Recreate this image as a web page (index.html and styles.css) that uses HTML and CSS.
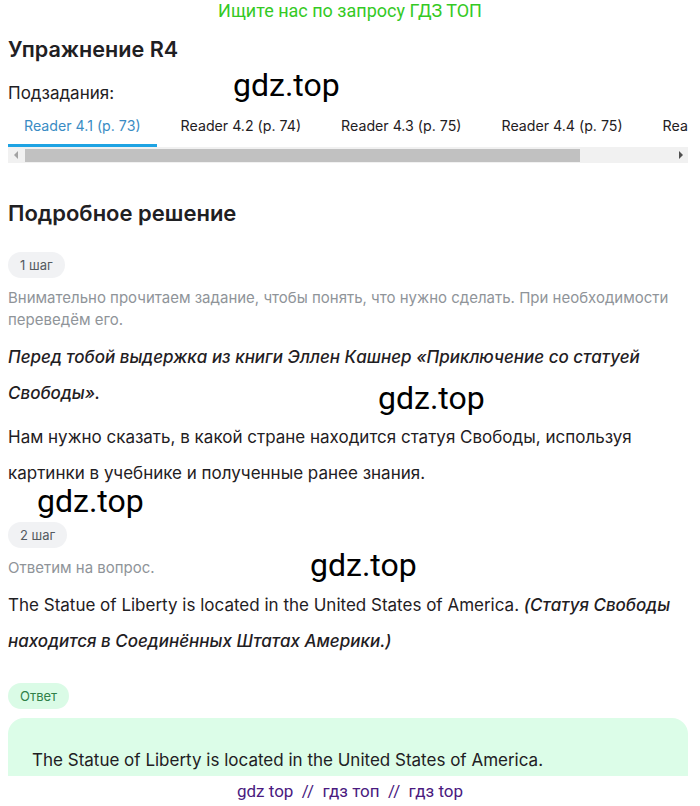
FILE: index.html
```html
<!DOCTYPE html>
<html lang="ru">
<head>
<meta charset="utf-8">
<title>Упражнение R4</title>
<link rel="stylesheet" href="styles.css">
</head>
<body>
<div class="banner">Ищите нас по запросу ГДЗ ТОП</div>
<main class="page">
  <h1 class="title">Упражнение R4</h1>
  <div class="subtasks-label">Подзадания:</div>
  <div class="tabs-wrap">
    <div class="tabs">
      <div class="tab active">Reader 4.1 (p. 73)</div>
      <div class="tab">Reader 4.2 (p. 74)</div>
      <div class="tab">Reader 4.3 (p. 75)</div>
      <div class="tab">Reader 4.4 (p. 75)</div>
      <div class="tab">Reader 4.5 (p. 76)</div>
    </div>
    <div class="scrollbar" aria-hidden="true">
      <span class="sb-btn sb-left"></span>
      <span class="sb-track"><span class="sb-thumb"></span></span>
      <span class="sb-btn sb-right"></span>
    </div>
  </div>

  <h2 class="section-title">Подробное решение</h2>

  <div class="step">
    <span class="pill">1 шаг</span>
    <p class="hint">Внимательно прочитаем задание, чтобы понять, что нужно сделать. При необходимости переведём его.</p>
    <p class="text italic">Перед тобой выдержка из книги Эллен Кашнер «Приключение со статуей Свободы».</p>
    <p class="text">Нам нужно сказать, в какой стране находится статуя Свободы, используя картинки в учебнике и полученные ранее знания.</p>
  </div>

  <div class="step step2">
    <span class="pill">2 шаг</span>
    <p class="hint">Ответим на вопрос.</p>
    <p class="text">The Statue of Liberty is located in the United States of America. <em class="italic">(Статуя Свободы находится в Соединённых Штатах Америки.)</em></p>
  </div>

  <div class="answer">
    <span class="pill pill-green">Ответ</span>
    <div class="answer-box">
      <p class="answer-text">The Statue of Liberty is located in the United States of America.</p>
    </div>
  </div>

  <span class="wm wm1">gdz.top</span>
  <span class="wm wm2">gdz.top</span>
  <span class="wm wm3">gdz.top</span>
  <span class="wm wm4">gdz.top</span>
</main>
<footer class="footer">gdz top &nbsp;//&nbsp; гдз топ &nbsp;//&nbsp; гдз top</footer>
</body>
</html>
```

FILE: styles.css
```css
html, body {
  margin: 0;
  padding: 0;
  background: #ffffff;
}
body {
  font-family: "Inter", "Roboto", "Liberation Sans", sans-serif;
  color: #1f2023;
}
.banner {
  text-align: center;
  color: #34c924;
  font-family: "Roboto", "Liberation Sans", sans-serif;
  font-size: 18px;
  line-height: 22px;
}
.page {
  position: relative;
  padding: 13px 12px 60px 8px;
}
.title {
  margin: 0;
  font-size: 21.6px;
  line-height: 28px;
  font-weight: 600;
}
.subtasks-label {
  margin-top: 20px;
  font-size: 17px;
  line-height: 20px;
}
.tabs-wrap {
  margin-top: 4px;
}
.tabs {
  display: flex;
  gap: 8px;
  overflow: hidden;
  white-space: nowrap;
}
.tab {
  flex: none;
  padding: 9px 16px 9px;
  font-size: 14.2px;
  line-height: 19px;
  color: #1f2023;
  border-bottom: 3px solid transparent;
}
.tab.active {
  color: #3a8cc4;
  border-bottom-color: #1ea3e3;
}
.scrollbar {
  display: flex;
  height: 16px;
  background: #f1f1f1;
}
.sb-btn {
  position: relative;
  flex: none;
  width: 15px;
  display: flex;
  align-items: center;
  justify-content: center;
}
.sb-btn::before {
  content: "";
  width: 0;
  height: 0;
  border-top: 4px solid transparent;
  border-bottom: 4px solid transparent;
}
.sb-left::before {
  border-right: 4px solid #a3a3a3;
}
.sb-right::before {
  border-left: 4px solid #505050;
}
.sb-track {
  flex: 1;
  display: flex;
  padding: 2px 0 1px 2px;
}
.sb-thumb {
  width: 85.6%;
  background: #c1c1c1;
}
.section-title {
  margin: 36px 0 0 0;
  font-size: 22px;
  line-height: 28px;
  font-weight: 600;
}
.step {
  display: flex;
  flex-direction: column;
  align-items: flex-start;
}
.pill {
  display: inline-block;
  margin-top: 25px;
  padding: 0 12px;
  height: 26px;
  line-height: 26px;
  border-radius: 13px;
  background: #f1f2f4;
  color: #555b61;
  font-size: 13px;
}
.step2 .pill {
  margin-top: 31px;
}
.hint {
  margin: 9px 0 0 0;
  color: #8f9499;
  font-size: 15px;
  line-height: 22px;
}
.text {
  margin: 8px 0 0 0;
  font-size: 17px;
  line-height: 36px;
  color: #1f2023;
}
.italic {
  font-style: italic;
  font-weight: 500;
}
.answer {
  display: flex;
  flex-direction: column;
  align-items: flex-start;
}
.pill-green {
  background: #dafbe6;
  color: #2f8048;
  margin-top: 24px;
}
.answer-box {
  align-self: stretch;
  margin-top: 9px;
  background: #dcfde8;
  border-radius: 16px;
  padding: 29px 24px 30px;
}
.answer-text {
  margin: 0;
  font-size: 17px;
  line-height: 26px;
  color: #1f2023;
}
.wm {
  position: absolute;
  font-family: "Roboto", "Liberation Sans", sans-serif;
  font-size: 32px;
  line-height: 34px;
  color: #000;
}
.wm1 { left: 233px; top: 46px; }
.wm2 { left: 378px; top: 359px; }
.wm3 { left: 37px; top: 462px; }
.wm4 { left: 310px; top: 526px; }
.footer {
  position: fixed;
  left: 0;
  right: 0;
  bottom: 0;
  height: 30px;
  line-height: 30px;
  background: #fff;
  text-align: center;
  color: #4a1a80;
  font-family: "Roboto", "Liberation Sans", sans-serif;
  font-size: 17px;
}
```
